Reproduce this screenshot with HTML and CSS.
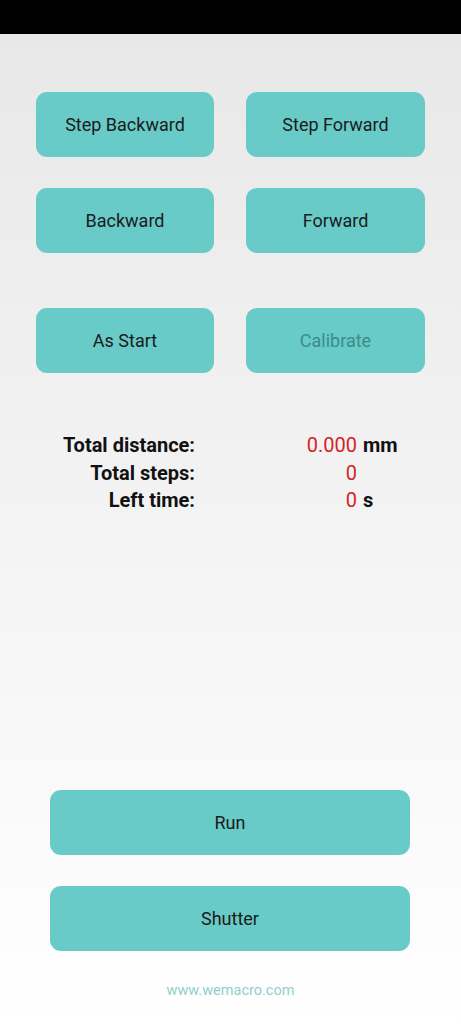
FILE: index.html
```html
<!DOCTYPE html>
<html>
<head>
<meta charset="utf-8">
<link rel="stylesheet" href="styles.css">
</head>
<body>
<div class="status-bar"></div>
<main class="screen">
  <section class="controls">
    <div class="btn-grid">
      <div class="btn">Step Backward</div>
      <div class="btn">Step Forward</div>
      <div class="btn">Backward</div>
      <div class="btn">Forward</div>
    </div>
    <div class="btn-grid row-gap">
      <div class="btn">As Start</div>
      <div class="btn disabled">Calibrate</div>
    </div>
  </section>
  <section class="stats">
    <div class="label">Total distance:</div><div class="value">0.000</div><div class="unit">mm</div>
    <div class="label">Total steps:</div><div class="value">0</div><div class="unit"></div>
    <div class="label">Left time:</div><div class="value">0</div><div class="unit">s</div>
  </section>
  <div class="spacer"></div>
  <section class="actions">
    <div class="btn wide">Run</div>
    <div class="btn wide">Shutter</div>
  </section>
  <footer class="footer">www.wemacro.com</footer>
</main>
</body>
</html>
```
FILE: styles.css
```css
html, body {
  margin: 0;
  padding: 0;
}
body {
  width: 461px;
  height: 1024px;
  font-family: Roboto, "Noto Sans", sans-serif;
  background: #ffffff;
  overflow: hidden;
}
.status-bar {
  height: 34px;
  background: #000;
}
.screen {
  height: 990px;
  box-sizing: border-box;
  background: linear-gradient(#e8e8e8, #ffffff);
  display: flex;
  flex-direction: column;
  padding-top: 58px;
}
.controls {
  padding-left: 36px;
}
.btn-grid {
  display: grid;
  grid-template-columns: 178px 179px;
  column-gap: 32px;
  row-gap: 31px;
}
.row-gap {
  margin-top: 55px;
}
.btn {
  height: 65px;
  background: #68cbc7;
  border-radius: 11px;
  display: flex;
  align-items: center;
  justify-content: center;
  font-size: 18px;
  color: #1b1b1b;
}
.btn.disabled {
  color: #3c8b87;
}
.stats {
  margin-top: 59px;
  display: grid;
  grid-template-columns: 195px 162px auto;
  line-height: 27.5px;
  font-size: 20px;
}
.label {
  text-align: right;
  font-weight: 700;
  color: #111;
}
.value {
  text-align: right;
  color: #d61f26;
}
.unit {
  padding-left: 6px;
  font-weight: 700;
  color: #111;
}
.spacer {
  flex: 1;
}
.actions {
  display: flex;
  flex-direction: column;
  gap: 31px;
  padding: 0 51px 0 50px;
}
.footer {
  height: 73px;
  box-sizing: border-box;
  padding-top: 5px;
  display: flex;
  align-items: center;
  justify-content: center;
  font-size: 14.5px;
  color: #8ed0cd;
}
```
